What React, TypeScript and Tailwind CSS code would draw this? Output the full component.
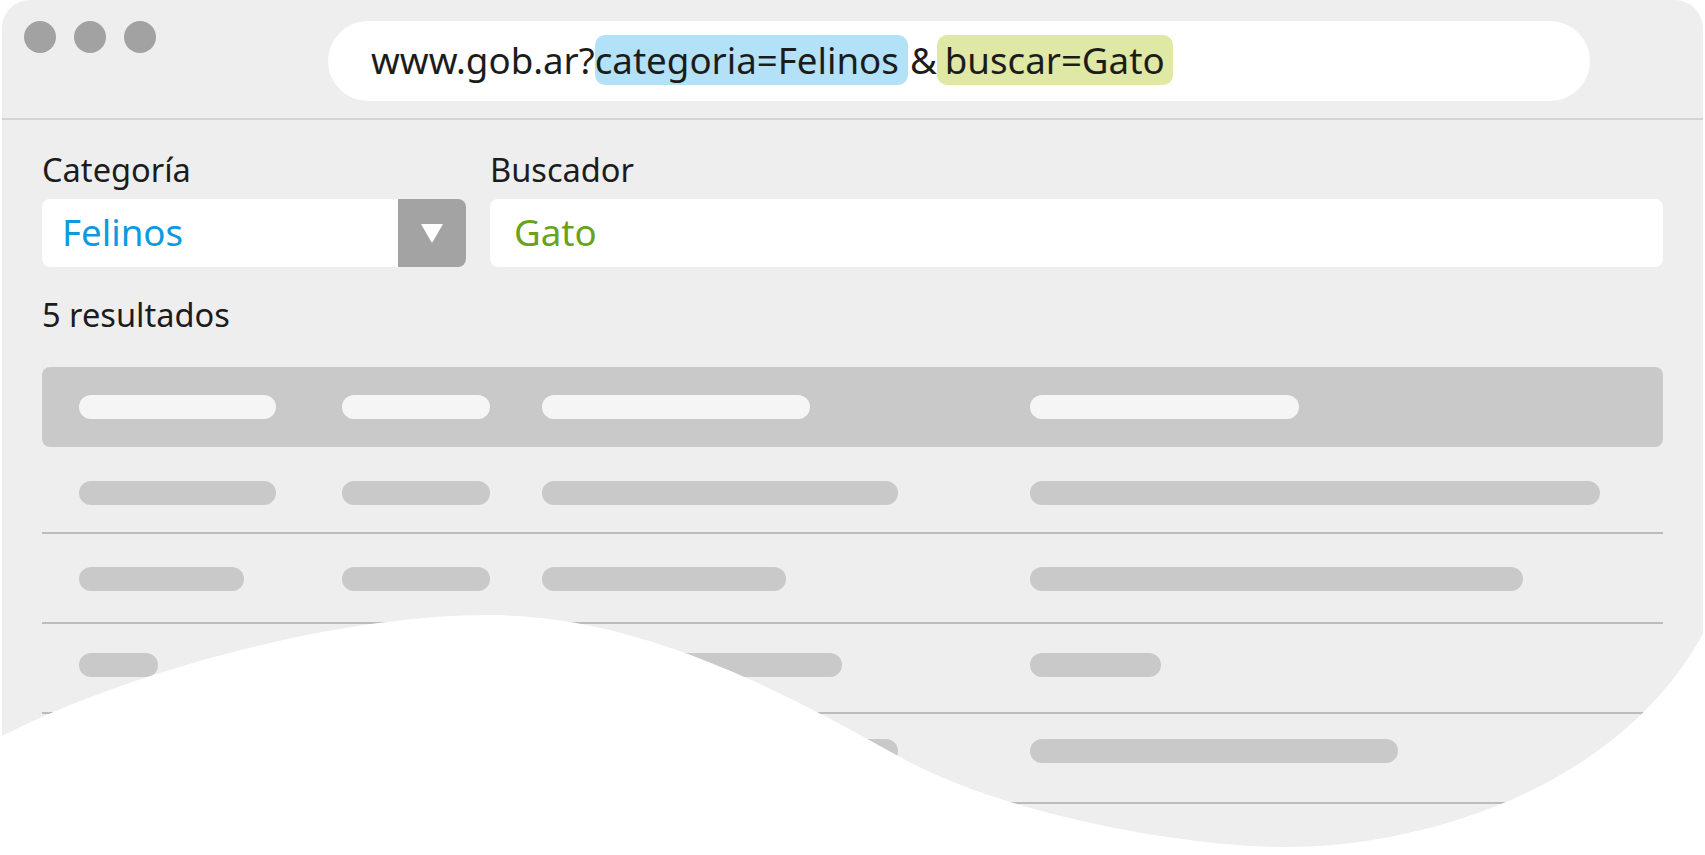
import React from 'react';

const headerPills = [197, 148, 268, 269];

// each row: pill widths, plus the spacing of that row
const rows: { pills: number[]; cls: string }[] = [
    { pills: [197, 148, 356, 570], cls: 'h-[87px] pt-[34px]' },
    { pills: [165, 148, 244, 493], cls: 'h-[90px] pt-[33px]' },
    { pills: [79, 148, 300, 131], cls: 'h-[90px] pt-[29px]' },
    { pills: [120, 148, 356, 368], cls: 'h-[90px] pt-[25px]' },
];

const Pill: React.FC<{ width: number; light?: boolean }> = ({ width, light }) => (
    <div
        className={`h-[24px] rounded-full ${light ? 'bg-[#f5f5f5]' : 'bg-[#c9c9c9]'}`}
        style={{ width }}
    />
);

const Wave: React.FC = () => (
    <svg
        className="absolute inset-0 pointer-events-none"
        width="1705"
        height="855"
        viewBox="0 0 1705 855"
    >
        <path
            d="M0,737 C120,675 330,615 489,615 C640,615 780,690 900,757 C1000,813 1180,847 1287,847 C1420,847 1620,790 1705,630 L1705,855 L0,855 Z"
            fill="#ffffff"
        />
    </svg>
);

export default function App() {
    return (
        <div
            className="relative w-[1705px] h-[855px] overflow-hidden bg-white text-[#1c1c1c]"
            style={{ fontFamily: '"Noto Sans", "Open Sans", sans-serif' }}
        >
            <div className="mx-[2px] h-full rounded-t-[28px] bg-[#eeeeee]">
                {/* browser top bar */}
                <div className="flex items-start h-[120px] pt-[21px] pl-[22px] border-b-2 border-[#d4d4d4]">
                    <div className="flex gap-[18px]">
                        <div className="w-[32px] h-[32px] rounded-full bg-[#a2a2a2]" />
                        <div className="w-[32px] h-[32px] rounded-full bg-[#a2a2a2]" />
                        <div className="w-[32px] h-[32px] rounded-full bg-[#a2a2a2]" />
                    </div>
                    <div className="ml-[172px] w-[1262px] h-[80px] rounded-full bg-white pl-[43px] pt-[12px]">
                        <p className="text-[36.7px] leading-normal whitespace-pre">
                            www.gob.ar?
                            <span className="bg-[#b3e1f7] rounded-[10px] pr-[9px]">categoria=Felinos</span>
                            <span className="pl-[2px]">&amp;</span>
                            <span className="bg-[#dfe8a4] rounded-[10px] px-[8px]">buscar=Gato</span>
                        </p>
                    </div>
                </div>

                <div className="px-[40px] pt-[28px]">
                    {/* filters */}
                    <div className="flex gap-[24px]">
                        <div className="w-[424px]">
                            <label className="block text-[32.6px] leading-[44px]">Categoría</label>
                            <div className="mt-[7px] flex h-[68px] rounded-lg bg-white overflow-hidden">
                                <div className="flex-1 flex items-center pl-[20px] text-[36.7px] text-[#0c9be0]">
                                    Felinos
                                </div>
                                <div className="w-[68px] flex items-center justify-center bg-[#a3a3a3]">
                                    <svg width="22" height="19" viewBox="0 0 22 19">
                                        <path d="M0,0 L22,0 L11,19 Z" fill="#ffffff" />
                                    </svg>
                                </div>
                            </div>
                        </div>
                        <div className="flex-1">
                            <label className="block text-[32.6px] leading-[44px]">Buscador</label>
                            <div className="mt-[7px] flex items-center h-[68px] rounded-lg bg-white pl-[24px] text-[36.7px] text-[#69a31b]">
                                Gato
                            </div>
                        </div>
                    </div>

                    <p className="mt-[26px] text-[32.6px] leading-[44px]">5 resultados</p>

                    {/* results table */}
                    <div className="mt-[30px]">
                        <div className="grid grid-cols-[263px_200px_488px_1fr] items-center h-[80px] pl-[37px] rounded-lg bg-[#c9c9c9]">
                            {headerPills.map((w, i) => (
                                <Pill key={i} width={w} light />
                            ))}
                        </div>
                        {rows.map((row, r) => (
                            <div
                                key={r}
                                className={`grid grid-cols-[263px_200px_488px_1fr] items-start pl-[37px] border-b-2 border-[#bcbcbc] ${row.cls}`}
                            >
                                {row.pills.map((w, i) => (
                                    <Pill key={i} width={w} />
                                ))}
                            </div>
                        ))}
                    </div>
                </div>
            </div>
            <Wave />
        </div>
    );
}
